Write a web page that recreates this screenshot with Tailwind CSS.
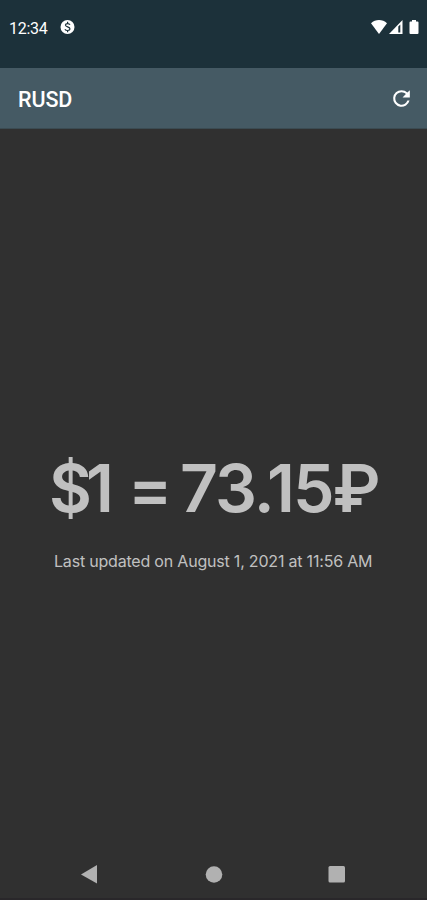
<!DOCTYPE html>
<html lang="en">
<head>
<meta charset="utf-8">
<title>RUSD</title>
<script src="https://cdn.jsdelivr.net/npm/@tailwindcss/browser@4"></script>
</head>
<body class="flex h-[900px] w-[427px] flex-col overflow-hidden bg-[#303030] font-['Roboto',sans-serif]">
  <div class="flex h-[68px] shrink-0 items-start bg-[#1c313a] pl-[9px] pr-[7px] pt-[18px] text-white">
    <span class="w-[51px] whitespace-nowrap text-base leading-[21px] tracking-[-0.3px]">12:34</span>
    <svg class="mt-[2px] h-[15px] w-[15px]" viewBox="0 0 15 15"><circle cx="7.5" cy="7" r="7" fill="#fff"/><path d="M10 4.800C9.300 3.200 5.600 3 5.400 5.100c0 2.200 4.600 1.400 4.600 3.800C9.900 10.900 6 11 4.900 9.200M7.600 1.800v1.700M7.600 10.500v1.700" fill="none" stroke="#1c313a" stroke-width="1.200"/></svg>
    <svg class="ml-auto mt-[2px] h-[16px] w-[49px]" viewBox="0 0 49 16" fill="#fff"><path d="M0 3.200C4.500-1 11.500-1 16 3.200L8 14z"/><path d="M18 14L31.500 0v14z"/><path d="M27.300 6.500l2-2v8h-2z" fill="#1c313a"/><path d="M39.500 1.500H41V0h4v1.500h1.500q1 0 1 1V13q0 1-1 1h-7q-1 0-1-1V2.500q0-1 1-1z"/></svg>
  </div>
  <header class="flex h-[61px] shrink-0 items-center justify-between border-b border-[#3b4b52] bg-[#455a64] pl-[18px] pr-[13px] text-white">
    <h1 class="pt-[3px] text-[21.5px] font-medium leading-6 tracking-[-0.1px]">RUSD</h1>
    <svg class="h-[25px] w-[25px]" viewBox="0 0 24 24" fill="#fff"><path d="M17.650 6.350A7.960 7.960 0 0 0 12 4a8 8 0 1 0 7.730 10h-2.080A6 6 0 1 1 12 6c1.660 0 3.140.69 4.220 1.780L13 11h7V4z"/></svg>
  </header>
  <main class="flex grow flex-col items-start pt-[319px] font-['Inter',sans-serif] text-[#c0c0c0]">
    <div class="flex h-20 whitespace-nowrap pl-[49px] text-[66px] font-semibold leading-[80px]">
      <span class="w-[79px] tracking-[-6px]">$1</span><span class="w-[52px]">=</span><span class="tracking-[-1.9px]">73.15₽</span>
    </div>
    <p class="mt-[23px] whitespace-nowrap pl-[54px] text-base leading-5 tracking-[-0.2px]">Last updated on August 1, 2021 at 11:56 AM</p>
  </main>
  <nav class="flex h-[50px] shrink-0 items-start border-b-2 border-[#29272a] pl-[81px] pt-[15px]">
    <svg class="h-[19px] w-[264px]" viewBox="0 0 264 19" fill="#b1b1b1"><path d="M0 9.500L16 0v18.500z"/><circle cx="133" cy="9.500" r="8.300"/><rect x="247.500" y="1" width="16.500" height="16.500" rx="1.500"/></svg>
  </nav>
</body>
</html>
